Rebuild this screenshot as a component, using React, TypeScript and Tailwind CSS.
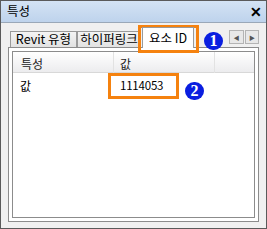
import React from "react";

const font = { fontFamily: '"Noto Sans CJK KR", "Liberation Sans", sans-serif' };

function Badge({ n }: { n: string }) {
  return (
    <div className="flex h-[18px] w-[19px] items-center justify-center rounded-full bg-[#0a1ee0] text-[16px] font-bold leading-none text-white" style={{ fontFamily: '"Liberation Serif", serif' }}>
      {n}
    </div>
  );
}

export default function App() {
  return (
    <div className="relative flex h-[229px] w-[267px] flex-col border border-[#5a5a5a] bg-[#f0f0f0] text-[12px] text-black" style={font}>
      {/* title bar */}
      <div className="flex h-[22px] items-center justify-between border-b border-[#9aa8b8] bg-gradient-to-b from-[#d4e3f4] to-[#bed3ec] pl-[6px] pr-[4px]">
        <span className="text-[12.5px] leading-none">특성</span>
        <span className="text-[14px] font-bold leading-none" style={{ fontFamily: '"Liberation Sans", sans-serif' }}>✕</span>
      </div>

      {/* tab row */}
      <div className="mt-[4px] flex h-[20px] items-end pl-[9px] pr-[7px] text-[12.5px]">
        <div className="flex h-[16px] w-[67px] items-center justify-center border border-b-0 border-[#9a9a9a] bg-gradient-to-b from-[#f4f4f4] to-[#e2e2e2] leading-none">Revit 유형</div>
        <div className="flex h-[16px] w-[64px] items-center justify-center border border-b-0 border-[#9a9a9a] bg-gradient-to-b from-[#f4f4f4] to-[#e2e2e2] leading-none">하이퍼링크</div>
        <div className="relative z-10 -mb-[1px] ml-[1px] flex h-[21px] w-[52px] items-center justify-center border border-b-0 border-[#9a9a9a] bg-white leading-none">요소 ID</div>
        <div className="mb-[3px] ml-auto flex gap-[1px]">
          <div className="flex h-[14px] w-[15px] items-center justify-center border border-[#b4b4b4] bg-[#e8e8e8] text-[6px] text-[#555]">◀</div>
          <div className="flex h-[14px] w-[14px] items-center justify-center border border-[#b4b4b4] bg-[#e8e8e8] text-[6px] text-[#555]">▶</div>
        </div>
      </div>

      {/* panel */}
      <div className="mx-[7px] mb-[6px] flex flex-1 flex-col border border-[#8c8c8c] bg-white p-[3px]">
        <div className="flex flex-1 flex-col border border-[#8c8c8c] bg-white">
          <div className="grid h-[21px] grid-cols-[101px_101px_1fr] border-b border-[#d8d8d8] bg-gradient-to-b from-white to-[#ececee]">
            <div className="flex items-center border-r border-[#e2e2e2] pl-[8px] pt-[3px] text-[#222]">특성</div>
            <div className="flex items-center border-r border-[#e2e2e2] pl-[6px] pt-[3px] text-[#222]">값</div>
            <div />
          </div>
          <div className="grid h-[25px] grid-cols-[101px_101px_1fr]">
            <div className="flex items-center pl-[7px]">값</div>
            <div className="flex items-center pl-[6px] text-[11.5px] tracking-[-0.2px]">1114053</div>
            <div />
          </div>
        </div>
      </div>

      {/* annotations */}
      <div className="pointer-events-none absolute left-[137px] top-[24px] h-[28px] w-[61px] border-[3px] border-[#f5820f]" />
      <div className="pointer-events-none absolute left-[203px] top-[31px]"><Badge n="1" /></div>
      <div className="pointer-events-none absolute left-[107px] top-[72px] h-[26px] w-[71px] border-[3px] border-[#f5820f]" />
      <div className="pointer-events-none absolute left-[184px] top-[81px]"><Badge n="2" /></div>
    </div>
  );
}
